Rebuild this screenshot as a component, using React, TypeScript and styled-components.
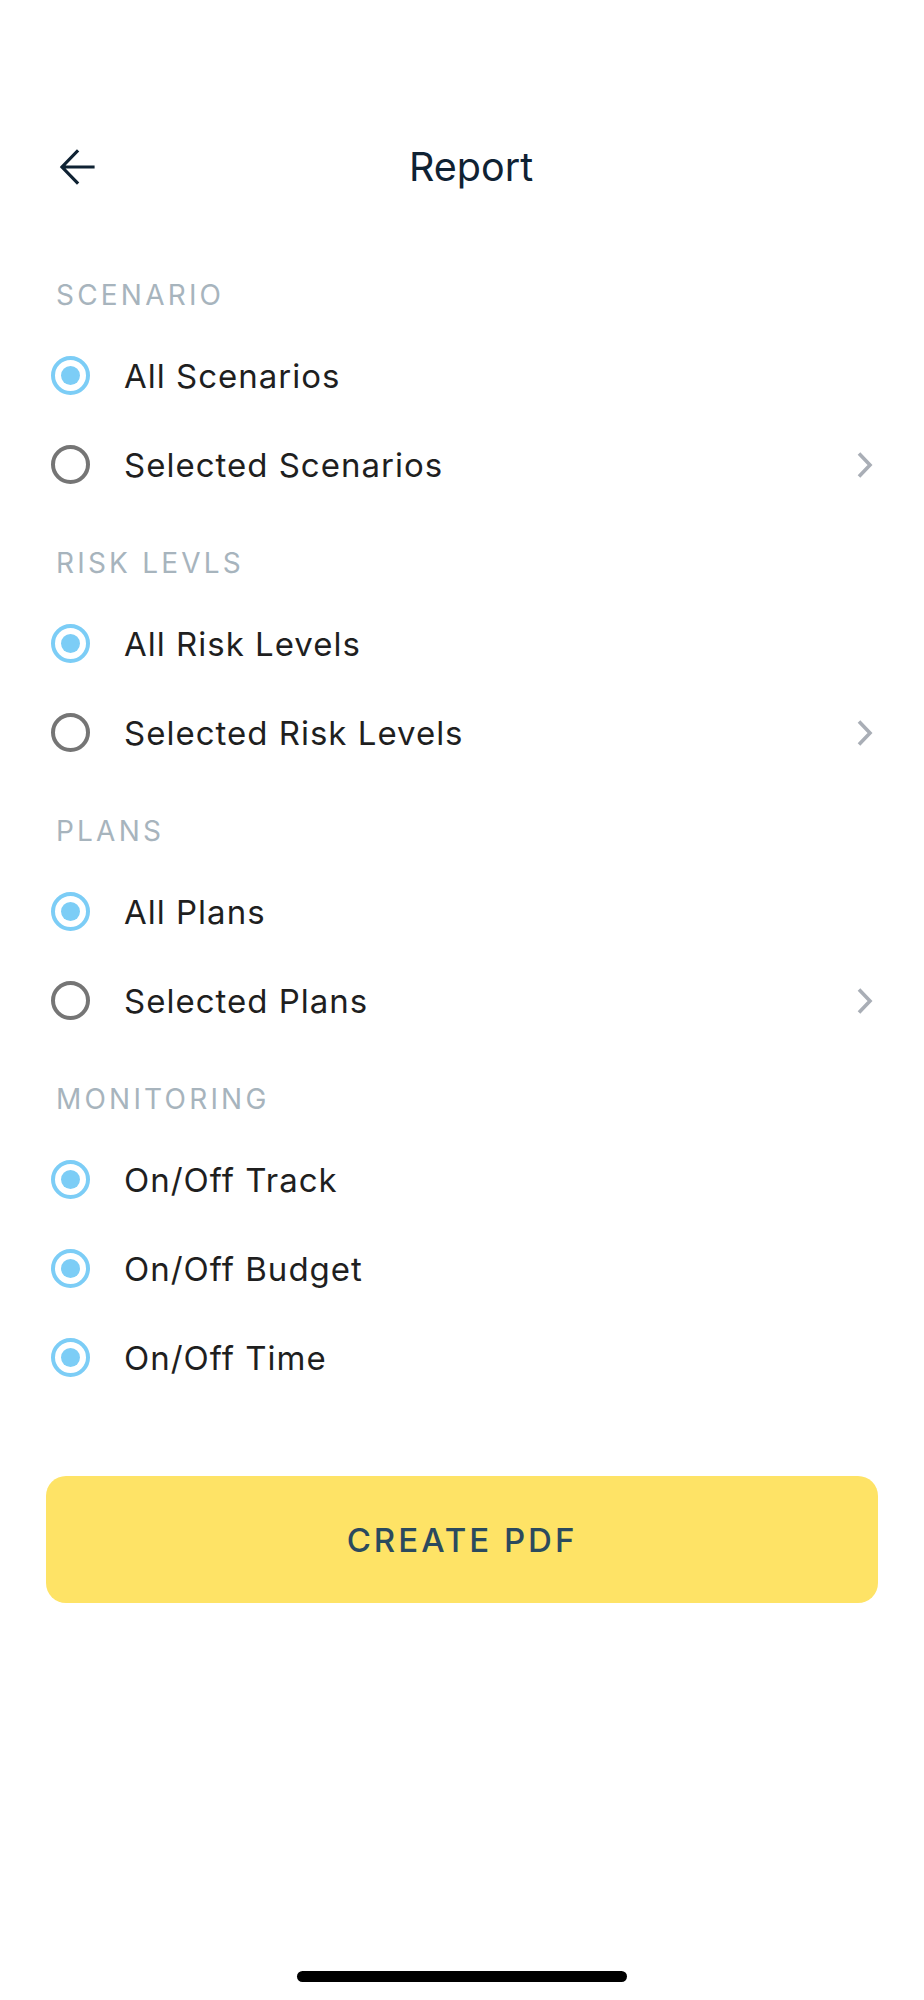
import { useState } from "react";
import styled, { createGlobalStyle } from "styled-components";

const GlobalStyle = createGlobalStyle`
  body {
    margin: 0;
    background: #ffffff;
    font-family: "Inter", "Liberation Sans", sans-serif;
  }
`;

interface IOption {
  id: string;
  label: string;
  chevron?: boolean;
}

interface ISection {
  title: string;
  options: IOption[];
  multi?: boolean;
}

const sections: ISection[] = [
  {
    title: "SCENARIO",
    options: [
      { id: "all", label: "All Scenarios" },
      { id: "sel", label: "Selected Scenarios", chevron: true },
    ],
  },
  {
    title: "RISK LEVLS",
    options: [
      { id: "all", label: "All Risk Levels" },
      { id: "sel", label: "Selected Risk Levels", chevron: true },
    ],
  },
  {
    title: "PLANS",
    options: [
      { id: "all", label: "All Plans" },
      { id: "sel", label: "Selected Plans", chevron: true },
    ],
  },
  {
    title: "MONITORING",
    multi: true,
    options: [
      { id: "track", label: "On/Off Track" },
      { id: "budget", label: "On/Off Budget" },
      { id: "time", label: "On/Off Time" },
    ],
  },
];

const Radio = ({ checked }: { checked: boolean }) => (
  <RadioRing checked={checked}>{checked && <RadioDot />}</RadioRing>
);

const App = () => {
  const [picked, setPicked] = useState<Record<string, string[]>>({
    SCENARIO: ["all"],
    "RISK LEVLS": ["all"],
    PLANS: ["all"],
    MONITORING: ["track", "budget", "time"],
  });

  const toggle = (section: ISection, id: string) => {
    setPicked((prev) => {
      const current = prev[section.title] || [];
      if (!section.multi) return { ...prev, [section.title]: [id] };
      const next = current.includes(id) ? current.filter((x) => x !== id) : [...current, id];
      return { ...prev, [section.title]: next };
    });
  };

  return (
    <>
      <GlobalStyle />
      <Page>
        <Header>
          <BackButton aria-label="back">
            <svg width="36" height="36" viewBox="0 0 36 36" fill="none">
              <path d="M34 18H3.5M18 2.5L3 18L18 33.5" stroke="#0f2233" strokeWidth="3.2" strokeLinecap="square" />
            </svg>
          </BackButton>
          <Title>Report</Title>
        </Header>

        <Content>
          {sections.map((section) => (
            <Section key={section.title}>
              <SectionLabel>{section.title}</SectionLabel>
              {section.options.map((opt) => (
                <Row key={opt.id} onClick={() => toggle(section, opt.id)}>
                  <Radio checked={(picked[section.title] || []).includes(opt.id)} />
                  <RowLabel>{opt.label}</RowLabel>
                  {opt.chevron && (
                    <svg width="18" height="28" viewBox="0 0 18 28" fill="none">
                      <path d="M3 2.5L14 14L3 25.5" stroke="#a9aeb6" strokeWidth="3.6" />
                    </svg>
                  )}
                </Row>
              ))}
            </Section>
          ))}
        </Content>

        <CreateButton>CREATE PDF</CreateButton>

        <HomeBar />
      </Page>
    </>
  );
};

const Page = styled.div`
  width: 924px;
  height: 2000px;
  display: flex;
  flex-direction: column;
  position: relative;
  overflow: hidden;
`;

const Header = styled.div`
  margin-top: 120px;
  height: 94px;
  display: flex;
  align-items: center;
  padding: 0 41px 0 59px;
`;

const BackButton = styled.div`
  width: 36px;
  height: 36px;
  display: flex;
  cursor: pointer;
`;

const Title = styled.div`
  flex: 1;
  text-align: center;
  font-family: "Inter", sans-serif;
  font-size: 39.5px;
  font-weight: 400;
  color: #0f2233;
  margin-right: 36px;
`;

const Content = styled.div`
  margin-top: 61px;
  display: flex;
  flex-direction: column;
  gap: 34px;
`;

const Section = styled.div`
  display: flex;
  flex-direction: column;
`;

const SectionLabel = styled.div`
  height: 40px;
  line-height: 40px;
  padding-left: 56px;
  margin-bottom: 16px;
  font-size: 28px;
  letter-spacing: 3.2px;
  color: #a7b4bd;
`;

const Row = styled.div`
  height: 89px;
  display: flex;
  align-items: center;
  padding: 0 50px 0 51px;
  cursor: pointer;
`;

const RadioRing = styled.div<{ checked: boolean }>`
  box-sizing: border-box;
  width: 39px;
  height: 39px;
  border-radius: 50%;
  border: 4.5px solid ${({ checked }) => (checked ? "#7ccdf6" : "#757575")};
  display: flex;
  align-items: center;
  justify-content: center;
  flex-shrink: 0;
`;

const RadioDot = styled.div`
  width: 19px;
  height: 19px;
  border-radius: 50%;
  background: #7ccdf6;
`;

const RowLabel = styled.div`
  flex: 1;
  margin-left: 34px;
  font-size: 33px;
  color: #1f1f1f;
  letter-spacing: 1px;
`;

const CreateButton = styled.button`
  margin: 74px 46px 0;
  height: 127px;
  border: none;
  border-radius: 20px;
  background: #fee366;
  color: #2b4a5e;
  font-family: "Inter", sans-serif;
  font-size: 33px;
  font-weight: 500;
  letter-spacing: 3px;
  cursor: pointer;
`;

const HomeBar = styled.div`
  position: absolute;
  left: 297px;
  top: 1971px;
  width: 330px;
  height: 11px;
  border-radius: 6px;
  background: #000000;
`;

export default App;
